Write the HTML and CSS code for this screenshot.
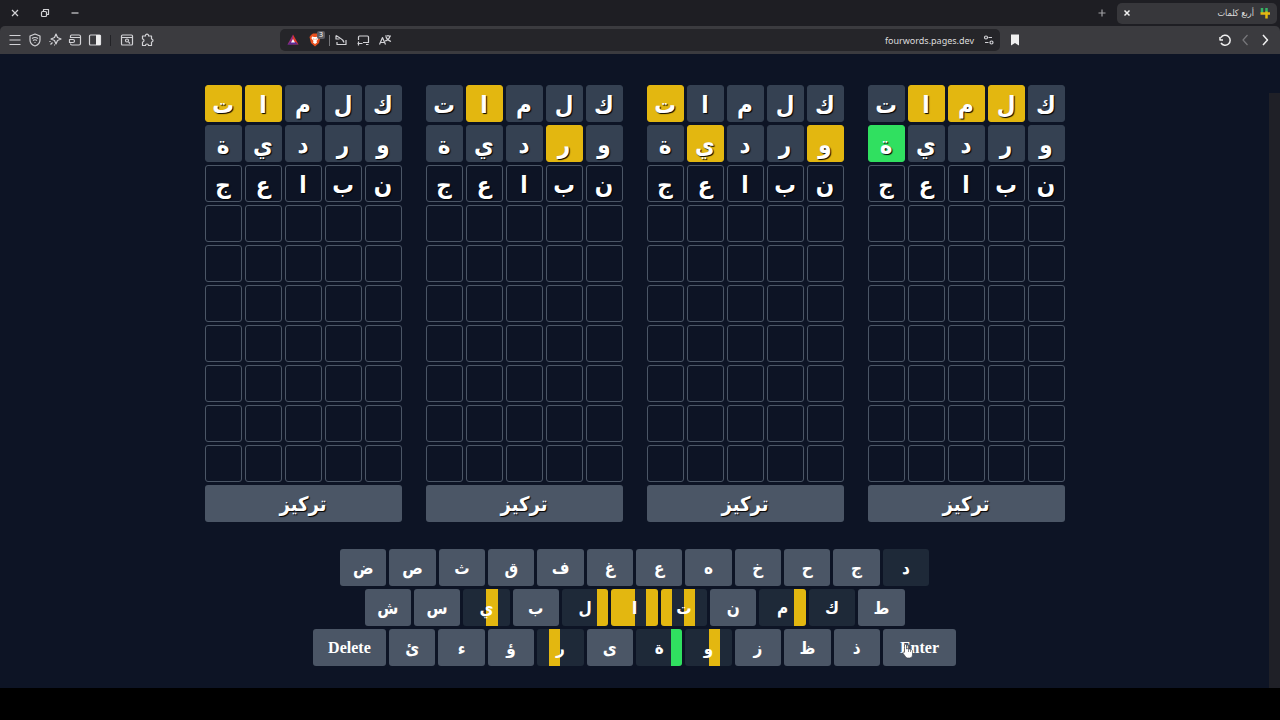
FILE: index.html
```html
<!DOCTYPE html>
<html lang="ar">
<head>
  <meta charset="UTF-8">
  <meta name="viewport" content="width=device-width, initial-scale=1.0">
  <title>أربع كلمات</title>
  <link rel="stylesheet" href="styles.css">
</head>
<body>

<header>
  <div class="tab-bar">
    <div class="window-buttons">
      <button type="button" aria-label="إغلاق"><svg viewBox="0 0 16 16"><path d="M5 5l6 6M11 5l-6 6"/></svg></button>
      <button type="button" aria-label="استعادة"><svg viewBox="0 0 16 16"><rect x="4.5" y="6.5" width="5" height="5" rx="1"/><path d="M6.5 6V4.500h5v5H10"/></svg></button>
      <button type="button" aria-label="تصغير"><svg viewBox="0 0 16 16"><path d="M4.500 8h7"/></svg></button>
    </div>
    <div class="tabs">
      <button type="button" aria-label="تبويب جديد"><svg viewBox="0 0 16 16" class="dim"><path d="M8 4.500v7M4.500 8h7"/></svg></button>
      <div class="tab">
        <button type="button" aria-label="إغلاق التبويب"><svg viewBox="0 0 16 16" class="bold"><path d="M5.500 5.500l5 5M10.500 5.500l-5 5"/></svg></button>
        <span class="tab-title" dir="rtl">أربع كلمات</span>
        <svg viewBox="0 0 16 16" class="logo"><path class="logo-green" d="M5 3v5M9.500 3v4"/><path class="logo-yellow" d="M3.500 8.500H13M9.500 6.500v7"/></svg>
      </div>
    </div>
  </div>

  <div class="toolbar">
    <div class="tools">
      <button type="button" aria-label="القائمة"><svg viewBox="0 0 16 16"><path d="M2.500 3.500h11M2.500 8h11M2.500 12.500h11"/></svg></button>
      <button type="button" aria-label="الحماية"><svg viewBox="0 0 16 16"><path d="M8 2l5 2v4c0 3-2 5-5 6-3-1-5-3-5-6V4zM5 6.500q3-2 6 0M6 8.500q2-1.500 4 0M7.500 10.500h1"/></svg></button>
      <button type="button" aria-label="المساعد"><svg viewBox="0 0 16 16"><path d="M9 2l1.500 3.500L14 7l-3.500 1.500L9 12 7.500 8.500 4 7l3.500-1.500zM5.500 10.500l-2 2M3 9v1M7 13h1"/></svg></button>
      <button type="button" aria-label="المحفظة"><svg viewBox="0 0 16 16"><path d="M3.500 6V4q0-1 1-1H12q1.500 0 1.500 1.500v7q0 1.500-1.500 1.500H5q-1.500 0-1.500-1.500M3.500 5.500h10M2.500 7.500H6q1.500 0 1.500 1.500T6 10.500H2.500z"/></svg></button>
      <button type="button" aria-label="الشريط الجانبي"><svg viewBox="0 0 16 16"><rect x="2.500" y="3" width="11" height="10" rx="1"/><path class="fill" d="M9 3h4.500v10H9z"/></svg></button>
      <span class="line"></span>
      <button type="button" aria-label="بحث في التبويبات"><svg viewBox="0 0 16 16"><rect x="2.500" y="3" width="11" height="10" rx="1"/><path d="M2.500 5.500h11M9.500 10l1.500 1.500"/><circle cx="8" cy="8.500" r="1.500"/></svg></button>
      <button type="button" aria-label="الإضافات"><svg viewBox="0 0 16 16"><path d="M3.500 4h3c-.5-2.500 3.500-2.500 3 0h3v3c2 0 2 3 0 3v3.500h-3c0-2-3-2-3 0h-3V10c2 0 2-3 0-3z"/></svg></button>
    </div>
    <div class="address">
      <div class="address-icons">
        <svg viewBox="0 0 16 16" class="rewards"><path class="r1" d="M8 2.500L2.500 12.500H8z"/><path class="r2" d="M8 2.500l5.500 10H8z"/><path class="r3" d="M2.500 12.500h11l-3-2.500h-5z"/><path class="r4" d="M8 7l2 3.500H6z"/></svg>
        <span class="shield">
          <svg viewBox="0 0 16 16"><path class="lion" d="M4 3l2-1.500h4L12 3l1.500 2-1.500 6-4 3.500L4 11 2.500 5z"/><path class="lion-face" d="M5 4.500l2 .5h2l2-.5.5 2L9.500 9l.5 1.500L8 12l-2-1.500L6.500 9l-2-2.500z"/><path class="lion" d="M6 6.500l1.500.5L7 8zM10 6.500L8.500 7 9 8z"/></svg>
          <span class="badge">3</span>
        </span>
        <span class="line light"></span>
        <svg viewBox="0 0 16 16"><path d="M3 3.500v3.500h3.500M3 3.500L7 6q3 1.500 4 4.500M4 10v2.500h9V8"/></svg>
        <svg viewBox="0 0 16 16"><path d="M3.500 8V5q0-1 1-1h8q1 0 1 1v5.500H8M2.500 11.500h5M3.500 9.500v4M11 12.500h2.500"/></svg>
        <svg viewBox="0 0 16 16"><path d="M2.500 12.500l3-7 3 7M3.500 10.500h4M8 4h6M11 3v1M13 4q-1 4-5 5M9 5q1 3 5 4.500"/></svg>
      </div>
      <div class="address-text">
        <a href="#">fourwords.pages.dev</a>
        <svg viewBox="0 0 16 16"><circle cx="5" cy="5.500" r="1.500"/><path d="M7.500 5.500H11M4 10.500h3.500"/><circle cx="10.500" cy="10.500" r="1.500"/></svg>
      </div>
    </div>
    <div class="navigation">
      <button type="button" aria-label="إشارة مرجعية"><svg viewBox="0 0 16 16"><path class="fill" d="M4 2.500h8v11L8 11l-4 2.500z"/></svg></button>
      <div class="nav-buttons">
        <button type="button" aria-label="تحديث"><svg viewBox="0 0 16 16" class="bold"><path d="M4 5.500a5 5 0 1 1 0 5.500M3 5v3h3"/></svg></button>
        <button type="button" aria-label="التالي"><svg viewBox="0 0 16 16" class="faint"><path d="M10.500 3L6 8l4.500 5"/></svg></button>
        <button type="button" aria-label="السابق"><svg viewBox="0 0 16 16" class="bold"><path d="M6 3l4.500 5L6 13"/></svg></button>
      </div>
    </div>
  </div>
</header>

<div class="viewport">
  <main dir="rtl">
    <div class="boards" id="boards"></div>
    <div class="keyboard" id="keyboard"></div>
  </main>
  <div class="scrollbar"><div class="thumb"></div></div>
</div>

<script src="script.js"></script>
</body>
</html>
```

FILE: styles.css
```css
body {
  margin: 0;
  height: 100vh;
  display: flex;
  flex-direction: column;
  background-color: #000;
  padding-bottom: 32px;
  box-sizing: border-box;
  font-family: "Noto Sans", "DejaVu Sans Condensed", "DejaVu Sans", sans-serif;
  color: #fff;
}

button {
  border: none;
  padding: 0;
  background: none;
  color: inherit;
  font: inherit;
}

header svg {
  display: block;
  width: 16px;
  height: 16px;
  fill: none;
  stroke: #d2d2d6;
  stroke-width: 1.2;
  stroke-linejoin: round;
}

header svg.bold {
  stroke: #f0f0f0;
  stroke-width: 1.5;
}

header svg.dim {
  stroke: #a0a0a4;
}

header svg.faint {
  stroke: #77777b;
}

.fill {
  fill: #f0f0f0;
  stroke: none;
}

/* tabs */

.tab-bar {
  display: flex;
  justify-content: space-between;
  align-items: center;
  height: 26px;
  padding: 0 3px 0 7px;
  background-color: #1e1e23;
}

.window-buttons {
  display: flex;
  gap: 14px;
}

.tabs {
  display: flex;
  align-items: center;
  gap: 7px;
}

.tab {
  display: flex;
  align-items: center;
  gap: 3px;
  width: 160px;
  height: 21px;
  padding: 0 4px 0 2px;
  box-sizing: border-box;
  border-radius: 5px;
  background-color: #37373b;
}

.tab-title {
  flex: 1;
  font-family: "DejaVu Sans Condensed", "DejaVu Sans", sans-serif;
  font-size: 9px;
  color: #dcdcdc;
}

header .logo {
  stroke-width: 2.5;
}

.logo-green {
  stroke: #35b565;
}

.logo-yellow {
  stroke: #e3b710;
}

/* toolbar */

header {
  background-color: #1e1e23;
}

.toolbar {
  display: flex;
  align-items: center;
  height: 28px;
  background-color: #3b3b3f;
  border-radius: 5px 5px 0 0;
}

.tools {
  display: flex;
  align-items: center;
  gap: 4px;
  width: 273px;
  padding-left: 7px;
}

.line {
  width: 1px;
  height: 11px;
  margin: 0 4px 0 3px;
  background-color: #222226;
}

.line.light {
  margin: 0;
  background-color: #77777b;
}

.address {
  flex: 1;
  display: flex;
  justify-content: space-between;
  align-items: center;
  height: 22px;
  padding: 0 3px 0 5px;
  border-radius: 5px;
  background-color: #252529;
}

.address-icons {
  display: flex;
  align-items: center;
  gap: 6px;
}

.address-icons .line + svg {
  margin-left: -3px;
}

.shield {
  position: relative;
}

.badge {
  position: absolute;
  top: -1px;
  right: -2px;
  width: 8px;
  border-radius: 2px;
  background-color: #5c5c62;
  font-size: 7px;
  line-height: 8px;
  text-align: center;
}

.lion { fill: #e8501f; stroke: none; }
.lion-face { fill: #fff; stroke: none; }
.rewards path { stroke: none; }
.r1 { fill: #9a2c78; }
.r2 { fill: #e0382c; }
.r3 { fill: #5b2a94; }
.rewards .r4 { fill: #fff; }

.address-text {
  display: flex;
  align-items: center;
  gap: 7px;
}

.address-text a {
  font-size: 9px;
  color: #dcdcdc;
  text-decoration: none;
}

.navigation {
  display: flex;
  justify-content: space-between;
  width: 266px;
  padding: 0 7px;
}

.nav-buttons {
  display: flex;
  gap: 4px;
}

/* game */

.viewport {
  flex: 1;
  display: flex;
  background-color: #0d1425;
}

main {
  flex: 1;
  display: flex;
  flex-direction: column;
  align-items: center;
  gap: 27px;
  padding-top: 31px;
  font-family: "DejaVu Sans Condensed", "DejaVu Sans", sans-serif;
  font-weight: bold;
}

.scrollbar {
  display: flex;
  width: 11px;
  padding-top: 39px;
  background-color: #0d1425;
}

.thumb {
  flex: 1;
  background-color: #1f2027;
}

.boards {
  display: flex;
  flex-direction: row-reverse;
  gap: 24px;
}

.board {
  display: grid;
  grid-template-columns: repeat(5, 37px);
  grid-auto-rows: 37px;
  gap: 3px;
}

.cell {
  display: flex;
  align-items: center;
  justify-content: center;
  box-sizing: border-box;
  border: 1px solid #4b5666;
  border-radius: 3px;
  padding-top: 2px;
  font-size: 24px;
  line-height: 24px;
  text-shadow: 1px 1px 1px #000;
}

.cell.absent {
  background-color: #354152;
  border-color: #354152;
}

.cell.present {
  background-color: #e3b710;
  border-color: #e3b710;
}

.cell.correct {
  background-color: #30e060;
  border-color: #30e060;
}

.focus-button {
  grid-column: 1 / -1;
  border-radius: 3px;
  background-color: #4b5666;
  font-size: 20px;
  line-height: 24px;
  text-shadow: 1px 1px 1px #000;
}

.keyboard {
  display: flex;
  flex-direction: column;
  align-items: center;
  gap: 3px;
}

.key-row {
  display: flex;
  gap: 3px;
  height: 37px;
}

.row-1 { width: 589px; }
.row-2 { width: 540px; }
.row-3 { width: 643px; }

.key {
  flex: 1;
  position: relative;
  overflow: hidden;
  border-radius: 3px;
  background-color: #4b5666;
  font-size: 17px;
  line-height: 24px;
}

.key.used {
  background-color: #1e2938;
}

.key.wide {
  flex: none;
  width: 73px;
  font-family: "Liberation Serif", serif;
  font-size: 16px;
}

.marks {
  position: absolute;
  inset: 0;
  display: flex;
  direction: ltr;
}

.marks span {
  flex: 1;
}

.marks .present {
  background-color: #e3b710;
}

.marks .correct {
  background-color: #30e060;
}

.letter {
  position: relative;
}

.hand {
  position: absolute;
  left: 19px;
  top: 14px;
  width: 12px;
  height: 16px;
  fill: #fff;
  stroke: #30343c;
  stroke-width: 0.6;
}
```

FILE: script.js
```js
const guesses = ['كلمات', 'وردية', 'نباعج'];

// one entry per board, left to right: - absent, p present, c correct
const results = [
  ['---pp', '-----'],
  ['---p-', '-p---'],
  ['----p', 'p--p-'],
  ['-ppp-', '----c']
];

const classes = { '-': 'absent', p: 'present', c: 'correct' };

const keyRows = [
  ['د', 'ج', 'ح', 'خ', 'ه', 'ع', 'غ', 'ف', 'ق', 'ث', 'ص', 'ض'],
  ['ط', 'ك', 'م', 'ن', 'ت', 'ا', 'ل', 'ب', 'ي', 'س', 'ش'],
  ['Enter', 'ذ', 'ظ', 'ز', 'و', 'ة', 'ى', 'ر', 'ؤ', 'ء', 'ئ', 'Delete']
];

const hand = '<svg class="hand" viewBox="0 0 12 16"><path d="M2.500 2q1-1.500 2 0v4q1-1 2 .3 1-.8 2 .4 1.500-.5 2 1V12q0 3-3 3H5.500Q4 15 3 13L.8 10q0-1.500 1.700-.7z"/><path d="M6.500 6.500V9M8.500 7v2"/></svg>';

function drawBoards() {
  let html = '';
  results.forEach(function (result) {
    html += '<section class="board">';
    for (let row = 0; row < 10; row++) {
      for (let col = 0; col < 5; col++) {
        const letter = guesses[row] ? guesses[row][col] : '';
        const state = result[row] ? classes[result[row][col]] : '';
        html += `<div class="cell ${state}">${letter}</div>`;
      }
    }
    html += '<button type="button" class="focus-button">تركيز</button></section>';
  });
  document.getElementById('boards').innerHTML = html;
}

// state of a letter on one board
function letterState(letter, result) {
  let state = '';
  result.forEach(function (marks, row) {
    const col = guesses[row].indexOf(letter);
    if (col >= 0 && marks[col] !== '-') {
      state = classes[marks[col]];
    }
  });
  return state;
}

function drawKeyboard() {
  const used = guesses[0] + guesses[1];
  let html = '';
  keyRows.forEach(function (row, i) {
    html += `<div class="key-row row-${i + 1}">`;
    row.forEach(function (key) {
      if (key.length > 1) {
        html += `<button type="button" class="key wide">${key}${key === 'Enter' ? hand : ''}</button>`;
      } else if (used.includes(key)) {
        const marks = results.map(result => `<span class="${letterState(key, result)}"></span>`).join('');
        html += `<button type="button" class="key used"><span class="marks">${marks}</span><span class="letter">${key}</span></button>`;
      } else {
        html += `<button type="button" class="key">${key}</button>`;
      }
    });
    html += '</div>';
  });
  document.getElementById('keyboard').innerHTML = html;
}

drawBoards();
drawKeyboard();
```
